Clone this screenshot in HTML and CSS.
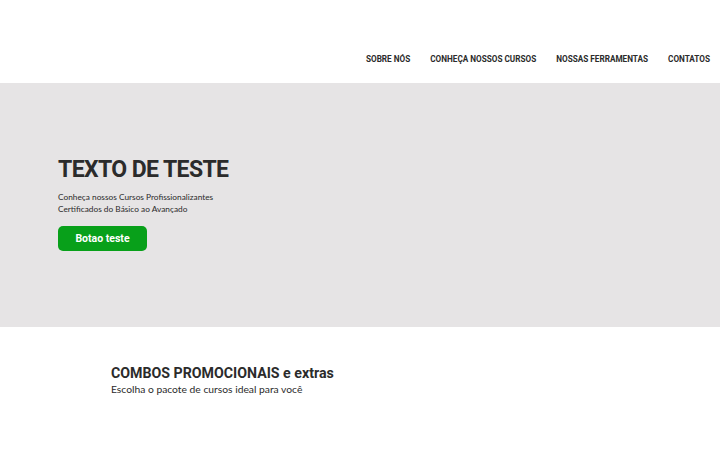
FILE: index.html
```html
<!DOCTYPE html>
<html lang="pt-BR">

<head>
    <meta charset="UTF-8">
    <title>Cursos</title>
    <link rel="stylesheet" href="styles.css">
</head>

<body>
    <div class="header">
        <ul class="nav">
            <li><a href="#">Sobre nós</a></li>
            <li><a href="#">Conheça nossos cursos</a></li>
            <li><a href="#">Nossas ferramentas</a></li>
            <li><a href="#">Contatos</a></li>
        </ul>
    </div>
    <div class="hero">
        <h1 class="hero-title">TEXTO DE TESTE</h1>
        <p class="hero-text">Conheça nossos Cursos Profissionalizantes<br>Certificados do Básico ao Avançado</p>
        <a class="hero-button" href="#">Botao teste</a>
    </div>
    <div class="combos">
        <h2 class="combos-title">COMBOS PROMOCIONAIS e extras</h2>
        <p class="combos-text">Escolha o pacote de cursos ideal para você</p>
    </div>
</body>

</html>
```

FILE: styles.css
```css
body,
ul,
li,
h1,
h2,
p,
a {
    padding: 0px;
    margin: 0px;
}

body {
    font-family: "Roboto", "Lato", sans-serif;
    color: #2b2b2b;
    background: #ffffff;
}

a {
    text-decoration: none;
    color: #2b2b2b;
}

.header {
    height: 83px;
    display: flex;
    justify-content: flex-end;
    align-items: flex-end;
}

.nav {
    list-style: none;
    display: flex;
    gap: 20px;
    padding: 0 10px 17px 0;
}

.nav a {
    font-size: 8.2px;
    font-weight: bold;
    text-transform: uppercase;
}

.hero {
    height: 244px;
    background: #e6e4e5;
    padding-left: 58px;
    display: flex;
    flex-direction: column;
    justify-content: center;
    align-items: flex-start;
    box-sizing: border-box;
    padding-bottom: 4px;
}

.hero-title {
    font-size: 23px;
    font-weight: bold;
    line-height: 28px;
    letter-spacing: -0.6px;
}

.hero-text {
    font-family: "Lato", sans-serif;
    font-size: 8.3px;
    line-height: 12px;
    margin-top: 7px;
}

.hero-button {
    display: block;
    margin-top: 11px;
    width: 89px;
    height: 25px;
    line-height: 25px;
    text-align: center;
    background: #08a01a;
    color: #ffffff;
    border-radius: 5px;
    font-size: 10.5px;
    font-weight: bold;
}

.combos {
    padding: 37px 0 0 111px;
}

.combos-title {
    font-size: 14.2px;
    font-weight: bold;
    line-height: 18px;
}

.combos-text {
    font-family: "Lato", sans-serif;
    font-size: 10.3px;
    line-height: 14px;
}
```
